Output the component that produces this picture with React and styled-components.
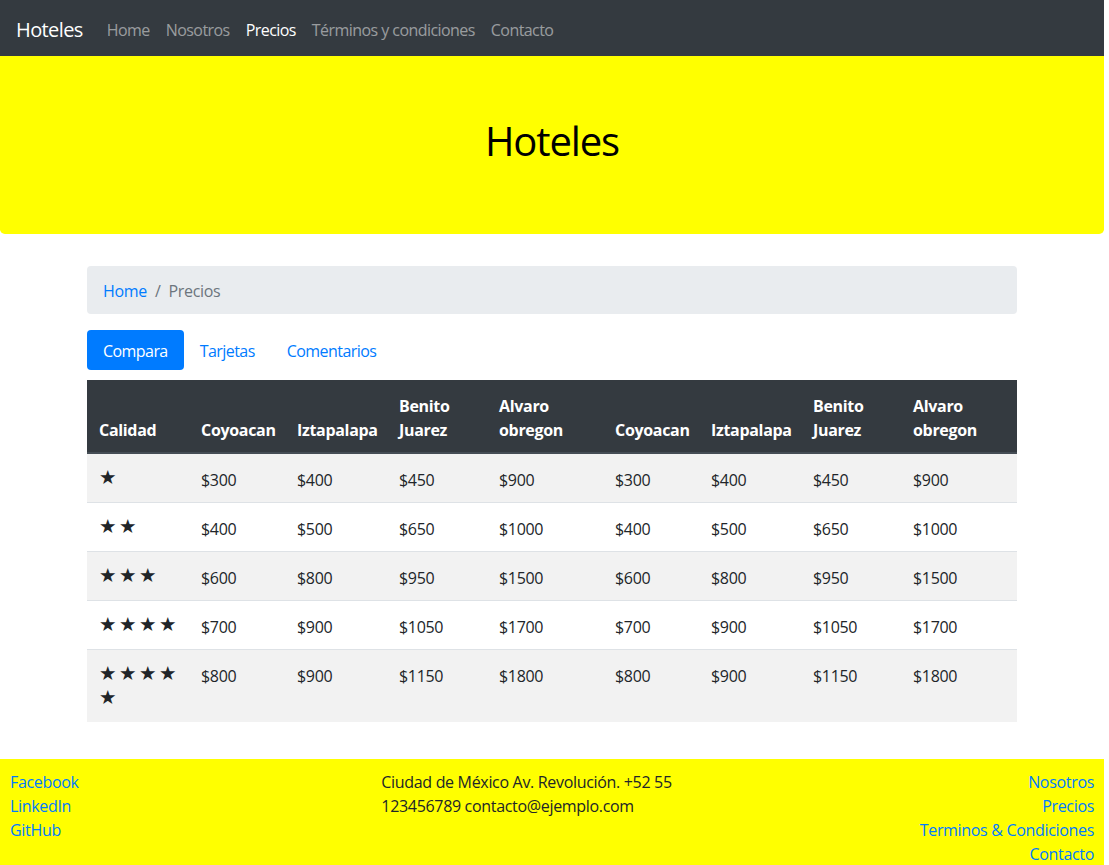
import React from "react";
import styled, { createGlobalStyle } from "styled-components";

const GlobalStyle = createGlobalStyle`
  html, body { margin: 0; padding: 0; overflow: hidden; background: #fff; }
  body {
    font-family: "Open Sans", "Noto Sans", Arial, sans-serif;
    font-size: 16px;
    line-height: 1.5;
    letter-spacing: -0.02em;
    color: #212529;
  }
  * { box-sizing: border-box; }
`;

const Page = styled.div`
  width: 1104px;
`;

const Navbar = styled.nav`
  height: 56px;
  background: #343a40;
  display: flex;
  align-items: center;
  padding: 10px 16px 6px;
`;

const Brand = styled.a`
  font-size: 20px;
  line-height: 30px;
  letter-spacing: -0.03em;
  color: #fff;
  margin-right: 16px;
  text-decoration: none;
`;

const NavList = styled.div`
  display: flex;
`;

const NavLink = styled.a`
  padding: 8px;
  letter-spacing: -0.035em;
  color: ${(p) => (p.$active ? "#fff" : "rgba(255,255,255,.5)")};
  text-decoration: none;
`;

const Jumbotron = styled.header`
  background: #ffff00;
  height: 178px;
  padding-bottom: 8px;
  border-radius: 0 0 4.8px 4.8px;
  display: flex;
  align-items: center;
  justify-content: center;
  margin-bottom: 32px;
`;

const Title = styled.h1`
  margin: 0;
  font-size: 40px;
  font-weight: 400;
  line-height: 48px;
  letter-spacing: -1.1px;
  color: #000;
`;

const Container = styled.main`
  width: 930px;
  margin: 0 auto;
`;

const Breadcrumb = styled.ol`
  list-style: none;
  margin: 0 0 16px;
  padding: 13px 16px 11px;
  background: #e9ecef;
  border-radius: 4px;
  display: flex;
  height: 48px;
`;

const Crumb = styled.li`
  color: ${(p) => (p.$link ? "#007bff" : "#6c757d")};
`;

const Sep = styled.span`
  color: #6c757d;
  padding: 0 8px;
`;

const Pills = styled.div`
  display: flex;
  margin-bottom: 10px;
`;

const Pill = styled.a`
  padding: 9px 16px 7px;
  border-radius: 4px;
  letter-spacing: -0.035em;
  background: ${(p) => (p.$active ? "#007bff" : "transparent")};
  color: ${(p) => (p.$active ? "#fff" : "#007bff")};
  text-decoration: none;
`;

const Table = styled.table`
  width: 930px;
  table-layout: fixed;
  border-collapse: collapse;
  margin-bottom: 37px;
`;

const Th = styled.th`
  background: #343a40;
  color: #fff;
  font-weight: 700;
  text-align: left;
  vertical-align: bottom;
  padding: 14px 12px 10px;
  border-bottom: 2px solid #454d55;
`;

const Tr = styled.tr`
  background: ${(p) => (p.$striped ? "#f2f2f2" : "#fff")};
`;

const Td = styled.td`
  padding: ${(p) => (p.$stars ? "12px" : "14px 12px 10px")};
  vertical-align: top;
  border-top: 1px solid #dee2e6;
`;

const Stars = styled.div`
  display: flex;
  flex-wrap: wrap;
  column-gap: 4px;
  width: 78px;
`;

const Star = styled.span`
  display: inline-block;
  width: 16px;
  height: 24px;
  font-family: "DejaVu Sans", sans-serif;
  font-size: 19.5px;
  line-height: 24px;
  letter-spacing: 0;
  text-align: center;
  color: #212529;
`;

const Footer = styled.footer`
  background: #ffff00;
  padding: 11px 10px 9px;
  display: grid;
  grid-template-columns: 1fr 1fr 1fr;
  height: 116px;
`;

const FootCol = styled.div`
  display: flex;
  flex-direction: column;
  align-items: ${(p) => (p.$right ? "flex-end" : "flex-start")};
  padding-left: ${(p) => (p.$center ? "10px" : "0")};
`;

const FootLink = styled.a`
  color: #007bff;
  text-decoration: none;
`;

const FootText = styled.p`
  margin: 0;
`;

const widths = [102, 96, 102, 100, 116, 96, 102, 100, 116];
const headers = [
  "Calidad",
  "Coyoacan",
  "Iztapalapa",
  "Benito Juarez",
  "Alvaro obregon",
  "Coyoacan",
  "Iztapalapa",
  "Benito Juarez",
  "Alvaro obregon",
];
const rows = [
  [1, 300, 400, 450, 900],
  [2, 400, 500, 650, 1000],
  [3, 600, 800, 950, 1500],
  [4, 700, 900, 1050, 1700],
  [5, 800, 900, 1150, 1800],
];

export default function App() {
  return (
    <Page>
      <GlobalStyle />
      <Navbar>
        <Brand>Hoteles</Brand>
        <NavList>
          <NavLink>Home</NavLink>
          <NavLink>Nosotros</NavLink>
          <NavLink $active>Precios</NavLink>
          <NavLink>Términos y condiciones</NavLink>
          <NavLink>Contacto</NavLink>
        </NavList>
      </Navbar>
      <Jumbotron>
        <Title>Hoteles</Title>
      </Jumbotron>
      <Container>
        <Breadcrumb>
          <Crumb $link>Home</Crumb>
          <Sep>/</Sep>
          <Crumb>Precios</Crumb>
        </Breadcrumb>
        <Pills>
          <Pill $active>Compara</Pill>
          <Pill>Tarjetas</Pill>
          <Pill>Comentarios</Pill>
        </Pills>
        <Table>
          <colgroup>
            {widths.map((w, i) => (
              <col key={i} style={{ width: w }} />
            ))}
          </colgroup>
          <thead>
            <tr>
              {headers.map((h, i) => (
                <Th key={i}>{h}</Th>
              ))}
            </tr>
          </thead>
          <tbody>
            {rows.map(([n, ...prices], r) => (
              <Tr key={r} $striped={r % 2 === 0}>
                <Td $stars>
                  <Stars>
                    {Array.from({ length: n }).map((_, k) => (
                      <Star key={k}>★</Star>
                    ))}
                  </Stars>
                </Td>
                {[...prices, ...prices].map((p, k) => (
                  <Td key={k}>${p}</Td>
                ))}
              </Tr>
            ))}
          </tbody>
        </Table>
      </Container>
      <Footer>
        <FootCol>
          <FootLink>Facebook</FootLink>
          <FootLink>LinkedIn</FootLink>
          <FootLink>GitHub</FootLink>
        </FootCol>
        <FootCol $center>
          <FootText>
            Ciudad de México Av. Revolución. +52 55 123456789 contacto@ejemplo.com
          </FootText>
        </FootCol>
        <FootCol $right>
          <FootLink>Nosotros</FootLink>
          <FootLink>Precios</FootLink>
          <FootLink>Terminos &amp; Condiciones</FootLink>
          <FootLink>Contacto</FootLink>
        </FootCol>
      </Footer>
    </Page>
  );
}
